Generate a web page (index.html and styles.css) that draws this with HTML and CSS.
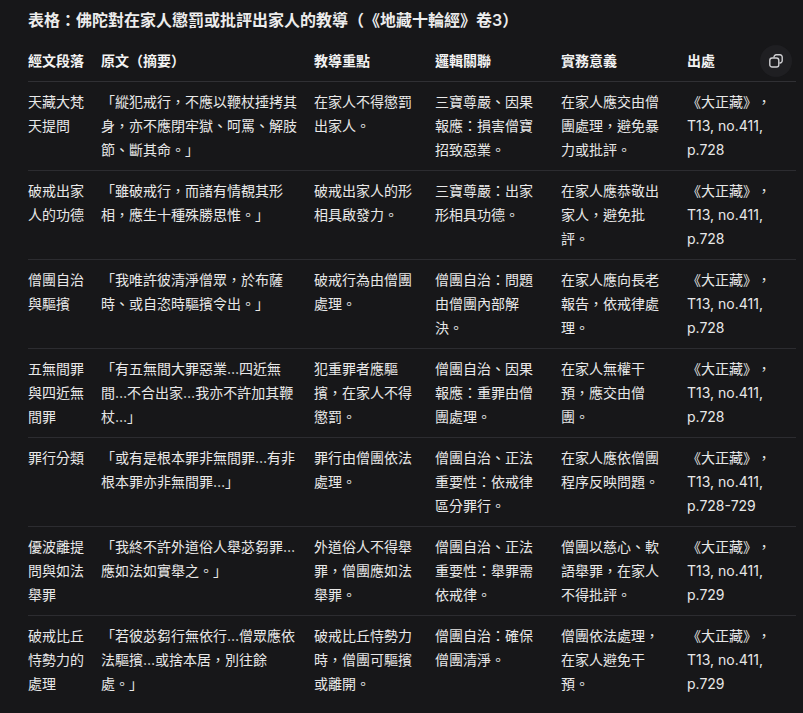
FILE: index.html
```html
<!DOCTYPE html>
<html lang="zh-Hant">
<head>
<meta charset="utf-8">
<title>表格</title>
<link rel="stylesheet" href="styles.css">
</head>
<body>
<h3 class="title">表格：佛陀對在家人懲罰或批評出家人的教導（《地藏十輪經》卷3）</h3>
<div class="table-wrap">
  <button class="copy-btn" aria-label="複製表格">
    <svg width="14" height="14" viewBox="0 0 14 14" fill="none" stroke="#cfcfd2" stroke-width="1.4" stroke-linejoin="round">
      <path d="M5 3.6 V3 a2.2 2.2 0 0 1 2.2 -2.2 h3.8 a2.2 2.2 0 0 1 2.2 2.2 v3.8 a2.2 2.2 0 0 1 -2.2 2.2 h-0.6"/>
      <rect x="0.8" y="4" width="9" height="9" rx="2.3"/>
    </svg>
  </button>
  <table class="data-table">
    <colgroup>
      <col class="c1"><col class="c2"><col class="c3"><col class="c4"><col class="c5"><col class="c6">
    </colgroup>
    <thead>
      <tr><th>經文段落</th><th>原文（摘要）</th><th>教導重點</th><th>邏輯關聯</th><th>實務意義</th><th>出處</th></tr>
    </thead>
    <tbody>
      <tr>
        <td>天藏大梵天提問</td>
        <td>「縱犯戒行，不應以鞭杖捶拷其身，亦不應閉牢獄、呵罵、解肢節、斷其命。」</td>
        <td>在家人不得懲罰出家人。</td>
        <td>三寶尊嚴、因果報應：損害僧寶招致惡業。</td>
        <td>在家人應交由僧團處理，避免暴力或批評。</td>
        <td>《大正藏》，T13, no.411, p.728</td>
      </tr>
      <tr>
        <td>破戒出家人的功德</td>
        <td>「雖破戒行，而諸有情覩其形相，應生十種殊勝思惟。」</td>
        <td>破戒出家人的形相具啟發力。</td>
        <td>三寶尊嚴：出家形相具功德。</td>
        <td>在家人應恭敬出家人，避免批評。</td>
        <td>《大正藏》，T13, no.411, p.728</td>
      </tr>
      <tr>
        <td>僧團自治與驅擯</td>
        <td>「我唯許彼清淨僧眾，於布薩時、或自恣時驅擯令出。」</td>
        <td>破戒行為由僧團處理。</td>
        <td>僧團自治：問題由僧團內部解決。</td>
        <td>在家人應向長老報告，依戒律處理。</td>
        <td>《大正藏》，T13, no.411, p.728</td>
      </tr>
      <tr>
        <td>五無間罪與四近無間罪</td>
        <td>「有五無間大罪惡業…四近無間…不合出家…我亦不許加其鞭杖…」</td>
        <td>犯重罪者應驅擯，在家人不得懲罰。</td>
        <td>僧團自治、因果報應：重罪由僧團處理。</td>
        <td>在家人無權干預，應交由僧團。</td>
        <td>《大正藏》，T13, no.411, p.728</td>
      </tr>
      <tr>
        <td>罪行分類</td>
        <td>「或有是根本罪非無間罪…有非根本罪亦非無間罪…」</td>
        <td>罪行由僧團依法處理。</td>
        <td>僧團自治、正法重要性：依戒律區分罪行。</td>
        <td>在家人應依僧團程序反映問題。</td>
        <td>《大正藏》，T13, no.411, p.728-729</td>
      </tr>
      <tr>
        <td>優波離提問與如法舉罪</td>
        <td>「我終不許外道俗人舉苾芻罪…應如法如實舉之。」</td>
        <td>外道俗人不得舉罪，僧團應如法舉罪。</td>
        <td>僧團自治、正法重要性：舉罪需依戒律。</td>
        <td>僧團以慈心、軟語舉罪，在家人不得批評。</td>
        <td>《大正藏》，T13, no.411, p.729</td>
      </tr>
      <tr>
        <td>破戒比丘恃勢力的處理</td>
        <td>「若彼苾芻行無依行…僧眾應依法驅擯…或捨本居，別往餘處。」</td>
        <td>破戒比丘恃勢力時，僧團可驅擯或離開。</td>
        <td>僧團自治：確保僧團清淨。</td>
        <td>僧團依法處理，在家人避免干預。</td>
        <td>《大正藏》，T13, no.411, p.729</td>
      </tr>
    </tbody>
  </table>
</div>
</body>
</html>
```
FILE: styles.css
```css
html, body {
  background: #171719;
}
body {
  margin: 0;
  padding: 8px 7px 0 28px;
  color: #ececec;
  font-family: "Inter", "Noto Sans CJK TC", "Noto Sans CJK SC", sans-serif;
  font-size: 14px;
  line-height: 24px;
  text-spacing-trim: space-all;
}
.title {
  margin: 0 0 9px;
  font-size: 16px;
  line-height: 24px;
  font-weight: 600;
  color: #ececec;
}
.table-wrap {
  position: relative;
  width: 768px;
}
.copy-btn {
  position: absolute;
  top: 4px;
  right: 4px;
  width: 32px;
  height: 32px;
  border: none;
  border-radius: 50%;
  background: #1f1f22;
  display: flex;
  align-items: center;
  justify-content: center;
  padding: 0;
}
.data-table {
  width: 768px;
  table-layout: fixed;
  border-collapse: collapse;
}
.c1 { width: 73px; }
.c2 { width: 213px; }
.c3 { width: 121px; }
.c4 { width: 126px; }
.c5 { width: 126px; }
.c6 { width: 109px; }
.data-table th,
.data-table td {
  text-align: left;
  vertical-align: top;
  padding: 8px 16px 8px 0;
  font-size: 14px;
  line-height: 24px;
  word-break: normal;
  overflow-wrap: break-word;
  text-spacing-trim: space-all;
}
.data-table th {
  font-weight: 600;
  color: #f2f2f2;
  border-bottom: 1px solid #303034;
}
.data-table td {
  font-weight: 400;
  color: #e8e8e8;
}
.data-table tbody tr {
  border-bottom: 1px solid #2c2c30;
}
.data-table tbody tr:last-child {
  border-bottom: none;
}
```
